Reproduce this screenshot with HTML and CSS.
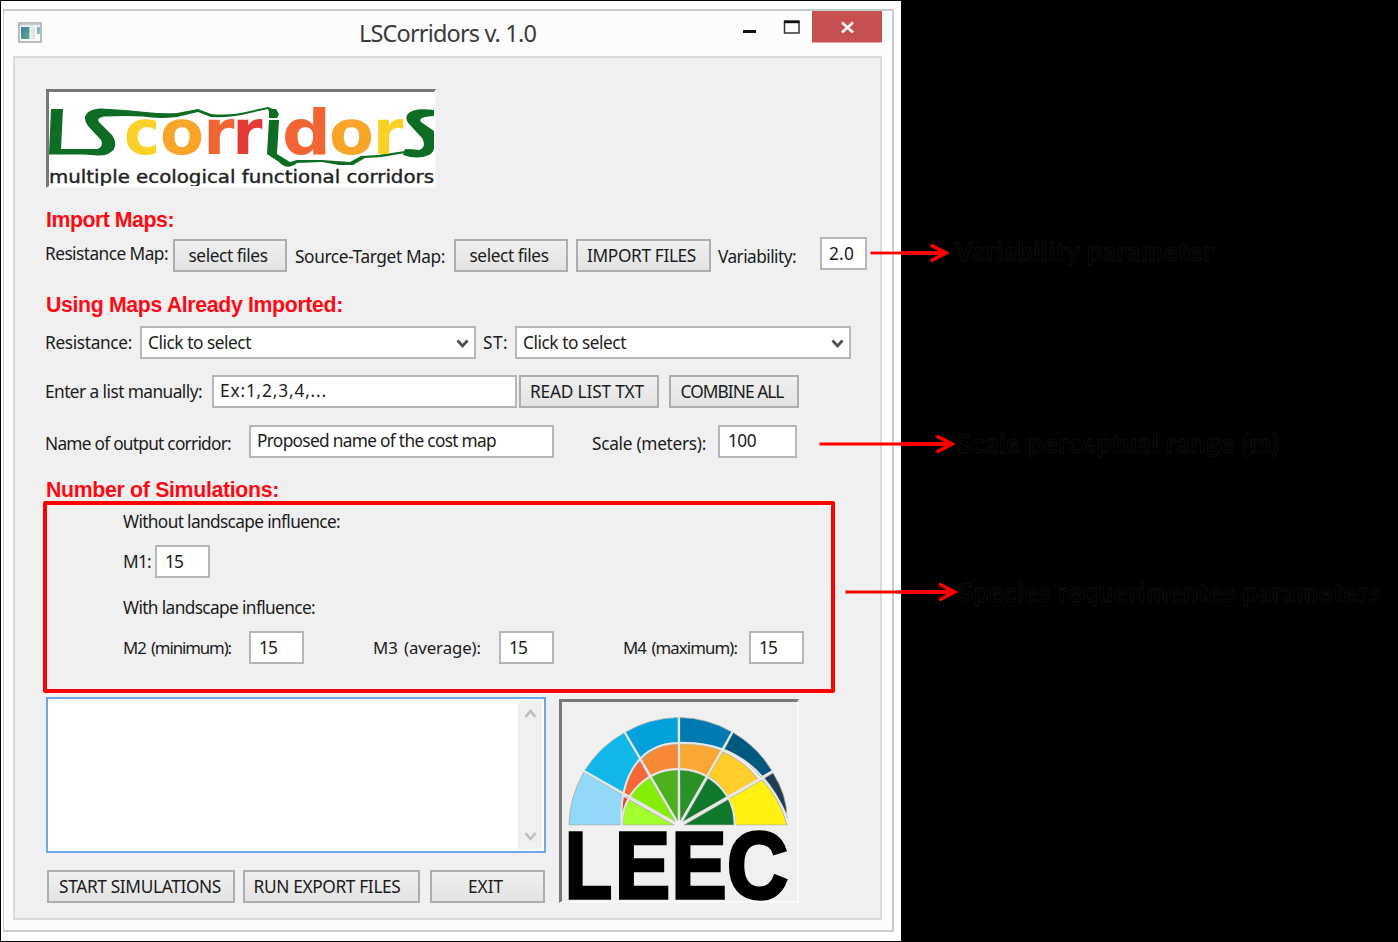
FILE: index.html
```html
<!DOCTYPE html>
<html lang="en">
<head>
<meta charset="utf-8">
<title>LSCorridors v. 1.0</title>
<link rel="stylesheet" href="styles.css">
</head>
<body>
<main class="sheet">
  <section class="window">
    <header class="titlebar">
      <svg class="app-icon" width="24" height="21" viewBox="0 0 24 21"><defs><linearGradient id="ig" x2="1" y2="1"><stop stop-color="#4878b0"/><stop offset="1" stop-color="#58b080"/></linearGradient></defs><rect x="1" y="1" width="22" height="19" fill="#f8f9fa" stroke="#a9afb7" stroke-width="1.6"/><path d="M2 2.7H22" stroke="#c8ced6" stroke-width="1.5"/><rect x="3" y="5" width="8.500" height="12" fill="url(#ig)"/><rect x="13" y="5" width="4" height="12" fill="#e5e5e5"/><rect x="19" y="5" width="3" height="7" fill="url(#ig)" opacity=".65"/></svg>
      <h1 class="title"><span data-fit="177">LSCorridors v. 1.0</span></h1>
      <svg class="caption" width="142" height="33" viewBox="0 0 142 33"><path d="M3 21.500H16" stroke="#111" stroke-width="3"/><rect x="44.500" y="11.500" width="14.500" height="11.500" fill="none" stroke="#333" stroke-width="1.500"/><path d="M44 11.800H59.500" stroke="#111" stroke-width="2.800"/><rect x="72" y="1" width="70" height="31.500" fill="#c75050"/><path d="M102 12.500L113 22.500M113 12.500L102 22.500" stroke="#fff" stroke-width="2.400"/></svg>
    </header>
    <div class="panel">
      <div class="sunken logo">
        <svg width="386" height="95" viewBox="49 92 386 95">
          <g class="logo-letters">
            <g fill="#0e6c25">
              <path d="M51 109H63L61 149H97Q104 147 101 140L88 126Q81 116 90 111Q94 108.500 101 108.500L125 110 146 112Q162 114 177 113L198 109 211 114Q231 116 250 111L268 107 273 109 278 117 271 118 268 109 250 113Q233 118 211 117L198 112 177 117Q158 119 143 116.500L125 116 104 116.500Q96 118 99 122L112 135Q119 146 111 152Q106 156 98 155.500L84 154.500H49Z"/>
              <path d="M269 109L276 109 279 114 277 118 269 118ZM269 120L279 120 277 154 290 162 297 160 322 160 350 162 361 156 378 155 405 151V153L382 157 365 158 353 165 339 165 322 162 297 163Q287 171 279 162L267 154Z"/>
              <path d="M434 110Q412 107 407 115Q405 120 410 125L422 138Q427 147 419 150Q412 149 405 149L403 155Q418 160 429 155Q434 152 434 148V131L421 122Q417 117 434 116Z"/>
            </g>
            <g class="logo-name">
              <text x="124" y="154" textLength="36" lengthAdjust="spacingAndGlyphs" fill="#fbd027">c</text><text x="160" y="154" textLength="44" lengthAdjust="spacingAndGlyphs" fill="#f8a529">o</text><text x="203.500" y="154" textLength="31" lengthAdjust="spacingAndGlyphs" fill="#f16434">r</text><text x="232.500" y="154" textLength="30" lengthAdjust="spacingAndGlyphs" fill="#e53935">r</text><text x="282" y="154" textLength="49" lengthAdjust="spacingAndGlyphs" fill="#f16434">d</text><text x="329" y="154" textLength="45" lengthAdjust="spacingAndGlyphs" fill="#f8a529">o</text><text x="373" y="154" textLength="30.500" lengthAdjust="spacingAndGlyphs" fill="#fbd027">r</text>
            </g>
            <text class="tagline" x="49" y="182.500" textLength="385" lengthAdjust="spacingAndGlyphs">multiple ecological functional corridors</text>
          </g>
        </svg>
      </div>

      <h2 class="section import-head"><span data-fit="128">Import Maps:</span></h2>
      <div class="row import-row">
        <label class="label raised w-resmap"><span data-fit="123">Resistance Map:</span></label>
        <button class="btn b-select"><span data-fit="79">select files</span></button>
        <label class="label w-source"><span data-fit="150">Source-Target Map:</span></label>
        <button class="btn b-select"><span data-fit="79">select files</span></button>
        <button class="btn b-import"><span data-fit="109">IMPORT FILES</span></button>
        <label class="label w-var"><span data-fit="78">Variability:</span></label>
        <div class="field f-var"><span data-fit="25">2.0</span></div>
      </div>

      <h2 class="section using-head"><span data-fit="297">Using Maps Already Imported:</span></h2>
      <div class="row using-row">
        <label class="label w-res"><span data-fit="87">Resistance:</span></label>
        <div class="field combo"><span data-fit="103">Click to select</span><svg class="chev" width="13" height="10" viewBox="0 0 13 10"><path d="M1.500 1.500L6.500 7L11.500 1.500" fill="none" stroke="#505050" stroke-width="2.800"/></svg></div>
        <label class="label w-st"><span data-fit="25">ST:</span></label>
        <div class="field combo"><span data-fit="103">Click to select</span><svg class="chev" width="13" height="10" viewBox="0 0 13 10"><path d="M1.500 1.500L6.500 7L11.500 1.500" fill="none" stroke="#505050" stroke-width="2.800"/></svg></div>
      </div>

      <div class="row list-row">
        <label class="label w-list"><span data-fit="157">Enter a list manually:</span></label>
        <div class="field wide high"><span data-fit="107">Ex:1,2,3,4,...</span></div>
        <button class="btn b-read"><span data-fit="114">READ LIST TXT</span></button>
        <button class="btn b-combine"><span data-fit="103">COMBINE ALL</span></button>
      </div>
      <div class="row name-row">
        <label class="label low w-name"><span data-fit="186">Name of output corridor:</span></label>
        <div class="field wide high"><span data-fit="239">Proposed name of the cost map</span></div>
        <label class="label low w-scale"><span data-fit="114">Scale (meters):</span></label>
        <div class="field high f-scale"><span data-fit="28">100</span></div>
      </div>

      <h2 class="section sim-head"><span data-fit="233">Number of Simulations:</span></h2>
      <div class="sim-box">
        <p class="label cap1"><span data-fit="217">Without landscape influence:</span></p>
        <div class="row m-row">
          <label class="label w-m1"><span data-fit="28">M1:</span></label>
          <div class="field f-m"><span data-fit="18">15</span></div>
        </div>
        <p class="label cap2"><span data-fit="192">With landscape influence:</span></p>
        <div class="row m-row">
          <label class="label w-m"><span data-fit="108">M2 (minimum):</span></label>
          <div class="field f-m"><span data-fit="18">15</span></div>
          <label class="label w-m next"><span data-fit="108">M3 (average):</span></label>
          <div class="field f-m"><span data-fit="18">15</span></div>
          <label class="label w-m next"><span data-fit="114">M4 (maximum):</span></label>
          <div class="field f-m"><span data-fit="18">15</span></div>
        </div>
      </div>

      <div class="bottom">
        <div class="left">
          <div class="log">
            <div class="scroll">
              <svg width="13" height="10" viewBox="0 0 13 10"><path d="M1.500 8L6.500 2L11.500 8" fill="none" stroke="#bdbdbd" stroke-width="2.500"/></svg>
              <svg width="13" height="10" viewBox="0 0 13 10"><path d="M1.500 2L6.500 8L11.500 2" fill="none" stroke="#bdbdbd" stroke-width="2.500"/></svg>
            </div>
          </div>
          <div class="row actions">
            <button class="btn b-start"><span data-fit="162">START SIMULATIONS</span></button>
            <button class="btn b-run"><span data-fit="147">RUN EXPORT FILES</span></button>
            <button class="btn b-exit"><span data-fit="35">EXIT</span></button>
          </div>
        </div>
        <div class="sunken leec">
          <svg width="236" height="199" viewBox="562 702 236 199">
            <g stroke="#a8a8a8" stroke-width=".8">
              <path d="M569 825A109.500 108 0 0 1 584 772L624 796Q621 810 621 825Z" fill="#92d8f7"/>
              <path d="M584.500 771A109 108 0 0 1 624 733L641 761Q628 775 623 793Z" fill="#0fb8e8"/>
              <path d="M625 732.500A109 108 0 0 1 678 717.500V743Q658 743 642 760Z" fill="#02a1dc"/>
              <path d="M679.500 717.500A109 108 0 0 1 732 732L723 750Q706 742 679.500 742Z" fill="#007bb2"/>
              <path d="M733 732.500A109 108 0 0 1 772 771L761 777Q745 758 724 750Z" fill="#005a80"/>
              <path d="M773 773Q787 795 787 818Q778 794 763 779Z" fill="#223d52"/>
              <path d="M622 813Q621 805 623 797L629 799Q624 806 622 813Z" fill="#e9403a"/>
              <path d="M624 794Q628 773 640 761L649 777Q635 786 628 798Z" fill="#f46737"/>
              <path d="M641 760Q656 744 678 744V770Q662 770 650 776Z" fill="#f68936"/>
              <path d="M679.500 744Q702 743 722 751L707 776Q693 770 679.500 770Z" fill="#faa833"/>
              <path d="M723 752Q744 761 758 779L728 797Q720 782 708 776Z" fill="#fecd2a"/>
              <path d="M762 780Q780 799 787 825H736Q735 810 729 799Z" fill="#fff212"/>
              <path d="M623 825Q623 810 628 799L674 825Z" fill="#a4ff2e"/>
              <path d="M629 797Q637 783 650 778L676 822Z" fill="#86ed08"/>
              <path d="M651 777Q663 770 678 770V822Z" fill="#4caf1d"/>
              <path d="M679.500 770Q694 770 707 777L680 822Z" fill="#2b9127"/>
              <path d="M708 778Q721 785 728 797L682 823Z" fill="#10792c"/>
              <path d="M729 799Q734 811 734 825H684Z" fill="#10792c"/>
            </g>
            <g stroke="#e6e6e6" stroke-width="2.200" fill="none"><path d="M679 716V825M624 731L679 825L733 731M584 771L679 825L773 771"/><path d="M621.500 825C619 773 642 743 679 743C729 741 765 766 787 817" stroke-width="2"/><path d="M622 825A56 55.500 0 0 1 735 825" stroke-width="2"/></g>
            <circle cx="679" cy="825" r="4.500" fill="#f0f0f0"/><path d="M569 826.500H788" stroke="#f0f0f0" stroke-width="2"/>
            <g class="leec-letters"><text x="565" y="897.500" textLength="47" lengthAdjust="spacingAndGlyphs">L</text><text x="615" y="897.500" textLength="55" lengthAdjust="spacingAndGlyphs">E</text><text x="671.500" y="897.500" textLength="55" lengthAdjust="spacingAndGlyphs">E</text><text x="727" y="897.500" textLength="61" lengthAdjust="spacingAndGlyphs">C</text></g>
          </svg>
        </div>
      </div>
    </div>
  </section>
</main>

<svg class="notes" width="1398" height="942" viewBox="0 0 1398 942">
  <g stroke="#f00" fill="none">
    <path d="M870.500 253H901" stroke-width="2.800"/><path d="M901 253H946" stroke-width="4"/><path d="M930.500 245L946 253L930.500 261" stroke-width="3.600"/>
    <path d="M819.500 444H901" stroke-width="2.800"/><path d="M901 444H952" stroke-width="4"/><path d="M936.500 436L952 444L936.500 452" stroke-width="3.600"/>
    <path d="M845.500 592H901" stroke-width="2.800"/><path d="M901 592H954" stroke-width="4"/><path d="M939 584L954.500 592L939 600" stroke-width="3.600"/>
  </g>
  <g class="note-text"><text x="955" y="260.500" textLength="258">Variability parameter</text><text x="957" y="452.500" textLength="322">Scale perceptual range (m)</text><text x="959" y="601.500" textLength="421">Species requerimentes parameters</text></g>
</svg>
<script src="fit.js"></script>
</body>
</html>
```
FILE: styles.css
```css
* { box-sizing: border-box; }
body { margin: 0; width: 1398px; height: 942px; overflow: hidden; background: #000; color: #1c1c1c; font-family: "Noto Sans", "Open Sans", sans-serif; font-size: 17.3px; padding: 1px; }
h1, h2, p { margin: 0; font-weight: normal; }
.sheet { width: 900px; height: 940px; background: #fff; padding: 8px 0 0 2px; }
.window { width: 891px; height: 923px; border: 2px solid #cbcbcb; border-left-width: 1px; background: #fcfcfc; padding: 0 9px 0 10px; display: flex; flex-direction: column; }
.titlebar { height: 45px; display: flex; }
.app-icon { margin: 11px 0 0 4px; }
.title { margin: 4px 0 0 317px; width: 177px; font-size: 23.5px; line-height: 36px; color: #3a3a3a; white-space: nowrap; }
.caption { margin: -1px 0 0 204px; flex: none; }
.panel { width: 869px; height: 864px; margin-left: -1px; border: 2px solid #dadada; background: #f0f0f0; padding: 31px 0 0 31px; display: flex; flex-direction: column; flex: none; }
.sunken { border: solid; border-width: 3px 2px 2px 3px; border-color: #777 #fafafa #fafafa #777; flex: none; overflow: hidden; }
.sunken svg { display: block; }
.logo { width: 390px; height: 99px; background: #fff; }
.logo-name { font-family: "DejaVu Sans", sans-serif; font-weight: bold; font-size: 62px; }
.tagline { font-family: "DejaVu Sans", sans-serif; font-size: 18px; fill: #222; stroke: #222; stroke-width: .4px; }
.section { font: bold 21.3px/26px "Liberation Sans", Arial, sans-serif; color: #ff0a14; white-space: nowrap; height: 26px; flex: none; }
.import-head { margin-top: 19px; }
.using-head { margin-top: 21px; }
.sim-head { margin-top: 19px; }
.row { display: flex; height: 33px; flex: none; }
.import-row { margin-top: 5px; }
.using-row { margin-top: 8px; }
.list-row { margin-top: 16px; }
.name-row { margin-top: 17px; }
.label { line-height: 33px; white-space: nowrap; flex: none; margin-left: -1px; }
.btn, .field { height: 33px; border: 2px solid #b4b4b6; font: inherit; color: inherit; white-space: nowrap; padding: 0; flex: none; }
.btn { background: linear-gradient(#f0f0f0, #e3e3e3); border-color: #adadad; text-align: center; line-height: 29px; padding: 0 4px 0 0; }
.field { background: #fff; line-height: 29px; padding-left: 7px; border-color: #b5b5bc; }
[data-fit] { display: inline-block; white-space: pre; }
.import-row .btn { margin-top: 1px; }
.import-row .label { padding-top: 2px; }
.import-row .raised { padding-top: 0; line-height: 31px; }
.import-row { align-items: flex-start; }
.w-resmap { width: 128px; }
.b-select { width: 114px; }
.w-source { width: 159px; }
.import-row .w-source { margin-left: 8px; }
.b-import { width: 135px; margin-left: 8px; }
.w-var { width: 102px; margin-left: 7px; }
.f-var { width: 47px; margin-top: -1px; }
.w-res { width: 95px; }
.combo { width: 336px; display: flex; align-items: flex-start; justify-content: space-between; padding: 0 5px 0 6px; }
.chev { margin-top: 11px; }
.w-st { width: 32px; margin-left: 7px; }
.w-list { width: 167px; }
.wide { width: 305px; padding-left: 6px; }
.high { line-height: 27px; }
.b-read { width: 140px; margin-left: 2px; }
.b-combine { width: 130px; margin-left: 10px; }
.low { padding-top: 2px; }
.w-name { width: 204px; }
.w-scale { width: 126px; margin-left: 38px; }
.f-scale { width: 79px; padding-left: 8px; }
.sim-box { width: 792px; height: 192px; margin: -2px 0 0 -3px; border: 4px solid #f00; border-radius: 2px; padding-left: 77px; flex: none; }
.cap1 { height: 33px; }
.m-row { margin-top: 7px; }
.cap2 { height: 33px; margin-top: 13px; }
.w-m1 { width: 32px; margin-right: 0; }
.w-m { width: 126px; font-size: 16.8px; word-spacing: 2px; }
.next { margin-left: 69px; }
.f-m { width: 55px; padding-left: 8px; }
.bottom { display: flex; margin-top: 4px; }
.left { width: 513px; }
.log { width: 500px; height: 156px; border: 2px solid #6aaaea; background: #fff; display: flex; justify-content: flex-end; padding: 2px; }
.scroll { width: 24px; background: #f0f0f0; display: flex; flex-direction: column; justify-content: space-between; align-items: center; padding: 8px 0; }
.actions { margin: 17px 0 0 1px; }
.b-start { width: 188px; padding-right: 2px; }
.b-run { width: 177px; margin-left: 8px; padding-right: 9px; }
.b-exit { width: 115px; margin-left: 10px; }
.leec { width: 240px; height: 204px; margin-top: 2px; }
.leec-letters { font-family: "Liberation Sans", Arial, sans-serif; font-weight: bold; font-size: 94px; fill: #000; stroke: #000; stroke-width: 3.5px; }
.notes { position: absolute; left: 0; top: 0; pointer-events: none; }
.note-text { font-family: Lato, sans-serif; font-weight: bold; font-size: 26px; fill: #000; stroke: #101010; stroke-width: .8px; }
```
FILE: fit.js
```javascript
// Tracks each caption to the width given in its data-fit attribute.
document.querySelectorAll('[data-fit]').forEach(function (el) {
  var target = parseFloat(el.dataset.fit);
  var width = el.getBoundingClientRect().width;
  el.style.letterSpacing = ((target - width) / el.textContent.length) + 'px';
});
```
